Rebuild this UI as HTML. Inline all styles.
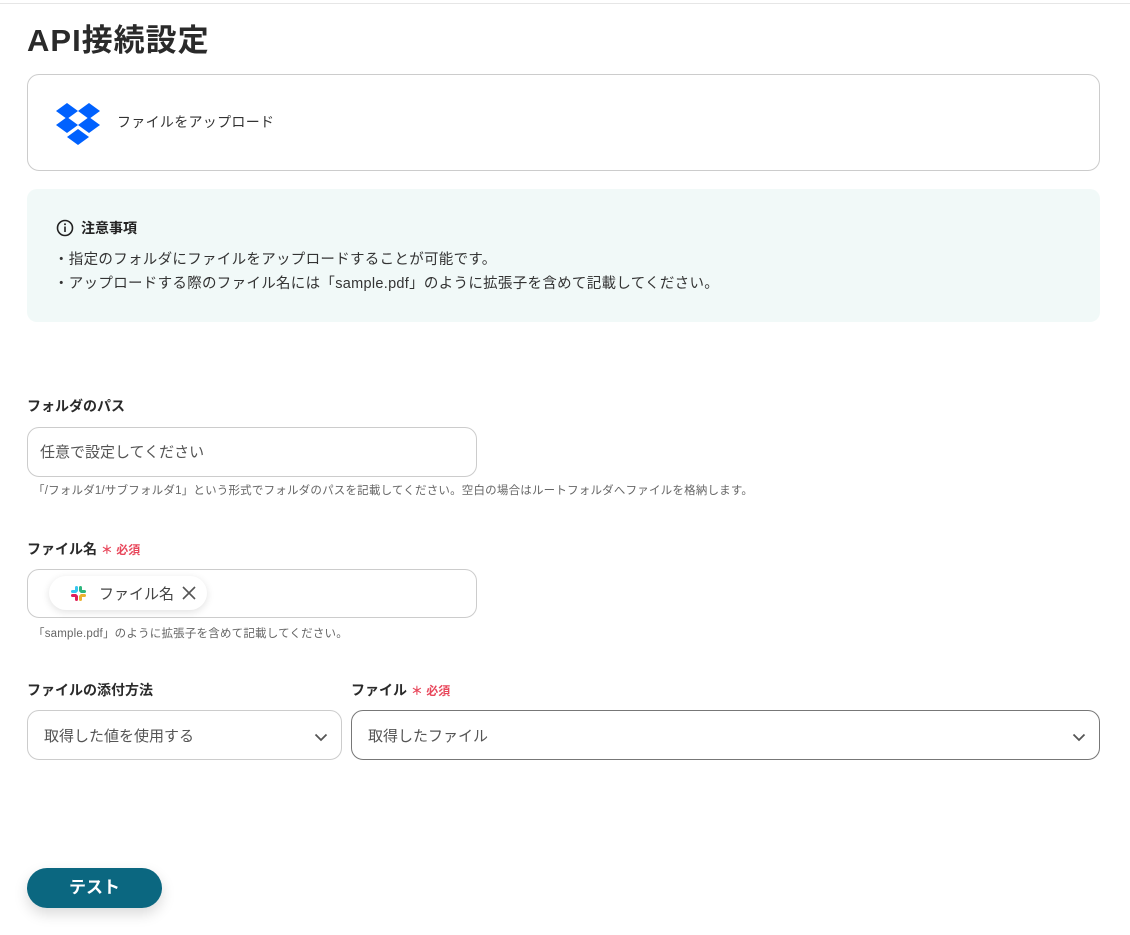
<!DOCTYPE html>
<html><head><meta charset="utf-8"><style>
*{box-sizing:border-box;margin:0;padding:0}
body{width:1130px;height:935px;background:#fff;font-family:"Liberation Sans","Noto Sans CJK JP",sans-serif;color:#333;position:relative;overflow:hidden}
.abs{position:absolute}
.topline{left:0;top:3px;width:1130px;height:1px;background:#e6e6e6}
h1{position:absolute;left:27px;top:15px;font-size:31px;font-weight:bold;color:#2a2a2a;letter-spacing:1px}
.card{left:27px;top:74px;width:1073px;height:97px;border:1px solid #ccc;border-radius:12px}
.note{left:27px;top:189px;width:1073px;height:133px;background:#f1f9f8;border-radius:10px}
.lbl{font-size:14px;font-weight:bold;color:#2a2a2a}
.req{color:#e8475b;font-size:12px;font-weight:bold}
.inp{border:1px solid #ccc;border-radius:12px;background:#fff}
.help{font-size:11.5px;color:#666;letter-spacing:0.2px}
.ph{font-size:15px;color:#555}
</style></head><body>
<div class="abs topline"></div>
<h1>API接続設定</h1>
<div class="abs card">
 <svg class="abs" style="left:27px;top:28px" width="46" height="42" viewBox="0 0 46 42">
  <g fill="#0061fe">
  <polygon points="12,0 23,8 12,16 1,8"/><polygon points="34,0 45,8 34,16 23,8"/>
  <polygon points="12,14 23,22 12,30 1,22"/><polygon points="34,14 45,22 34,30 23,22"/>
  <polygon points="23,26 34,34 23,42 12,34"/></g>
 </svg>
 <div class="abs" style="left:89px;top:37px;font-size:14px;color:#333;letter-spacing:0.3px">ファイルをアップロード</div>
</div>
<div class="abs note">
 <svg class="abs" style="left:29px;top:30px" width="18" height="18" viewBox="0 0 18 18"><circle cx="9" cy="9" r="7.5" fill="none" stroke="#222" stroke-width="1.6"/><rect x="8.2" y="7.5" width="1.6" height="5.5" fill="#222"/><circle cx="9" cy="5.2" r="1" fill="#222"/></svg>
 <div class="abs" style="left:54px;top:29px;font-size:14px;font-weight:bold;color:#222">注意事項</div>
 <div class="abs" style="left:27px;top:59px;font-size:14.5px;color:#333;line-height:24px;letter-spacing:0.3px">・指定のフォルダにファイルをアップロードすることが可能です。<br>・アップロードする際のファイル名には「sample.pdf」のように拡張子を含めて記載してください。</div>
</div>

<div class="abs lbl" style="left:27px;top:396px">フォルダのパス</div>
<div class="abs inp" style="left:27px;top:427px;width:450px;height:50px"><div class="abs ph" style="left:12px;top:13px">任意で設定してください</div></div>
<div class="abs help" style="left:33px;top:482px">「/フォルダ1/サブフォルダ1」という形式でフォルダのパスを記載してください。空白の場合はルートフォルダへファイルを格納します。</div>

<div class="abs lbl" style="left:27px;top:539px">ファイル名 <span class="req">＊ 必須</span></div>
<div class="abs inp" style="left:27px;top:569px;width:450px;height:49px">
 <div class="abs" style="left:21px;top:6px;width:158px;height:34px;border-radius:17px;background:#fff;box-shadow:0 2px 8px rgba(0,0,0,0.12)">
  <svg class="abs" style="left:21px;top:9px" width="17" height="17" viewBox="0 0 17 17">
   <rect x="5" y="1" width="3" height="6" rx="1.5" fill="#36c5f0"/><rect x="1" y="5" width="6" height="3" rx="1.5" fill="#36c5f0"/>
   <rect x="10" y="5" width="6" height="3" rx="1.5" fill="#2eb67d"/><rect x="9" y="1" width="3" height="6" rx="1.5" fill="#2eb67d"/>
   <rect x="9" y="10" width="3" height="6" rx="1.5" fill="#ecb22e"/><rect x="10" y="9" width="6" height="3" rx="1.5" fill="#ecb22e"/>
   <rect x="1" y="9" width="6" height="3" rx="1.5" fill="#e01e5a"/><rect x="5" y="10" width="3" height="6" rx="1.5" fill="#e01e5a"/>
  </svg>
  <div class="abs" style="left:50px;top:7px;font-size:15px;color:#444">ファイル名</div>
  <svg class="abs" style="left:133px;top:10px" width="14" height="14" viewBox="0 0 14 14"><path d="M1 1L13 13M13 1L1 13" stroke="#555" stroke-width="1.6"/></svg>
 </div>
</div>
<div class="abs help" style="left:33px;top:625px">「sample.pdf」のように拡張子を含めて記載してください。</div>

<div class="abs lbl" style="left:27px;top:680px">ファイルの添付方法</div>
<div class="abs inp" style="left:27px;top:710px;width:315px;height:50px">
 <div class="abs ph" style="left:16px;top:14px">取得した値を使用する</div>
 <svg class="abs" style="left:286px;top:22px" width="14" height="9" viewBox="0 0 14 9"><path d="M1.5 1.5L7 7L12.5 1.5" fill="none" stroke="#555" stroke-width="1.8"/></svg>
</div>
<div class="abs lbl" style="left:351px;top:680px">ファイル <span class="req">＊ 必須</span></div>
<div class="abs inp" style="left:351px;top:710px;width:749px;height:50px;border-color:#777">
 <div class="abs ph" style="left:16px;top:14px">取得したファイル</div>
 <svg class="abs" style="left:720px;top:22px" width="14" height="9" viewBox="0 0 14 9"><path d="M1.5 1.5L7 7L12.5 1.5" fill="none" stroke="#555" stroke-width="1.8"/></svg>
</div>

<div class="abs" style="left:27px;top:868px;width:135px;height:40px;border-radius:20px;background:#0b6780;box-shadow:0 6px 14px rgba(0,0,0,0.15);color:#fff;font-size:17px;font-weight:bold;text-align:center;line-height:40px">テスト</div>
</body></html>
